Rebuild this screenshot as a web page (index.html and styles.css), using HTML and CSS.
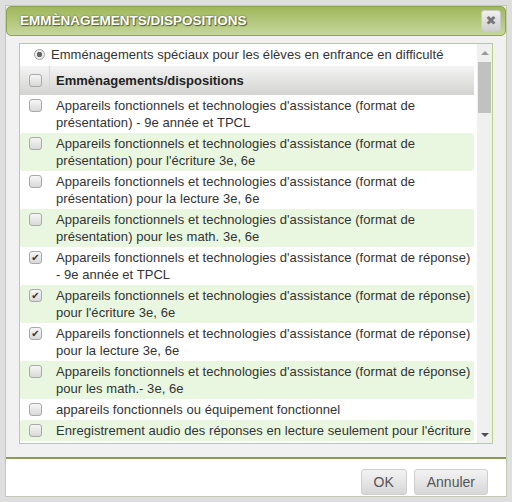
FILE: index.html
```html
<!DOCTYPE html>
<html lang="fr">
<head>
  <meta charset="UTF-8" />
  <title>Emmènagements/dispositions</title>
  <link rel="stylesheet" href="styles.css">
</head>
<body>
  <div class="dialog">
    <div class="titlebar">
      <span class="title">EMMÈNAGEMENTS/DISPOSITIONS</span>
      <button class="close-btn">✖</button>
    </div>
    <div class="content">
      <div class="listbox">
        <div class="list">
          <div class="radio-row"><span class="radio"></span>Emménagements spéciaux pour les élèves en enfrance en difficulté</div>
          <div class="head-row">
            <div class="col-check"><span class="box"></span></div>
            <div class="col-text">Emmènagements/dispositions</div>
          </div>
          <div class="row">
            <div class="col-check"><span class="box"></span></div>
            <div class="col-text">Appareils fonctionnels et technologies d'assistance (format de présentation) - 9e année et TPCL</div>
          </div>
          <div class="row alt">
            <div class="col-check"><span class="box"></span></div>
            <div class="col-text">Appareils fonctionnels et technologies d'assistance (format de présentation) pour l'écriture 3e, 6e</div>
          </div>
          <div class="row">
            <div class="col-check"><span class="box"></span></div>
            <div class="col-text">Appareils fonctionnels et technologies d'assistance (format de présentation) pour la lecture 3e, 6e</div>
          </div>
          <div class="row alt">
            <div class="col-check"><span class="box"></span></div>
            <div class="col-text">Appareils fonctionnels et technologies d'assistance (format de présentation) pour les math. 3e, 6e</div>
          </div>
          <div class="row">
            <div class="col-check"><span class="box checked">✔</span></div>
            <div class="col-text">Appareils fonctionnels et technologies d'assistance (format de réponse) - 9e année et TPCL</div>
          </div>
          <div class="row alt">
            <div class="col-check"><span class="box checked">✔</span></div>
            <div class="col-text">Appareils fonctionnels et technologies d'assistance (format de réponse) pour l'écriture 3e, 6e</div>
          </div>
          <div class="row">
            <div class="col-check"><span class="box checked">✔</span></div>
            <div class="col-text">Appareils fonctionnels et technologies d'assistance (format de réponse) pour la lecture 3e, 6e</div>
          </div>
          <div class="row alt">
            <div class="col-check"><span class="box"></span></div>
            <div class="col-text">Appareils fonctionnels et technologies d'assistance (format de réponse) pour les math.- 3e, 6e</div>
          </div>
          <div class="row">
            <div class="col-check"><span class="box"></span></div>
            <div class="col-text">appareils fonctionnels ou équipement fonctionnel</div>
          </div>
          <div class="row alt">
            <div class="col-check"><span class="box"></span></div>
            <div class="col-text">Enregistrement audio des réponses en lecture seulement pour l'écriture</div>
          </div>
        </div>
        <div class="scrollbar">
          <span class="arrow up"></span>
          <div class="track"><div class="thumb"></div></div>
          <span class="arrow down"></span>
        </div>
      </div>
    </div>
    <div class="footer">
      <button class="btn">OK</button>
      <button class="btn">Annuler</button>
    </div>
  </div>
</body>
</html>
```

FILE: styles.css
```css
/* base */
* { margin: 0; padding: 0; box-sizing: border-box; }
body { background: #dedede; font-family: "Liberation Sans", Arial, sans-serif; font-size: 13px; color: #333; }

.dialog { margin: 5px 0 0 5px; width: 502px; height: 492px; border: 1px solid #c4c9b4; background: #f1f1f1; display: flex; flex-direction: column; }

/* title bar */
.titlebar { height: 30px; border: 1px solid #8fa54f; border-radius: 5px; background: linear-gradient(#a0b75c, #c6d79b); display: flex; align-items: center; justify-content: space-between; padding: 0 4px 0 13px; }
.title { color: #fff; font-weight: bold; font-size: 13.5px; text-shadow: 0 0 2px #55602f, 1px 1px 1px #55602f; }
.close-btn { width: 20px; height: 22px; border: 1px solid #c9cbc3; border-radius: 3px; background: linear-gradient(#f0f0f0, #cfcfcf); color: #777; font-size: 13px; line-height: 20px; text-align: center; font-family: "DejaVu Sans", sans-serif; }

/* list */
.content { flex: 1; padding: 7px 13px 13px 13px; }
.listbox { height: 401px; border: 1px solid #b9cf8e; background: #fff; display: flex; }
.list { flex: 1; overflow: hidden; padding-right: 3px; letter-spacing: 0.05px; }

.radio-row { height: 22px; display: flex; align-items: center; padding-left: 14px; gap: 6px; }
.radio { width: 11px; height: 11px; border: 1px solid #a0a0a0; border-radius: 50%; background: radial-gradient(circle, #666 0 2.5px, #eee 3px); }

.head-row { height: 29px; display: flex; align-items: center; background: linear-gradient(#f4f4f4, #d3d3d1); font-weight: bold; color: #222; letter-spacing: 0; }
.head-row .col-check { border-right: 1px solid #cfdbe6; height: 100%; width: 30px; margin-right: 6px; }

.row { display: flex; align-items: flex-start; padding: 2px 0; line-height: 17px; border-radius: 3px; }
.row.alt { background: #e9f6e0; }
.col-check { width: 36px; flex: none; display: flex; align-items: center; padding-left: 9px; }
.row .col-check { height: 17px; }
.col-text { flex: 1; }

.box { width: 13px; height: 13px; border: 1px solid #a9a9a9; border-radius: 3px; background: linear-gradient(#f6f6f6, #d9d9d9); font-size: 10px; line-height: 11px; text-align: center; color: #333; font-family: "DejaVu Sans", sans-serif; letter-spacing: 0; }

/* scrollbar */
.scrollbar { width: 15px; background: #f0f0f0; display: flex; flex-direction: column; align-items: center; }
.arrow { height: 13px; display: flex; align-items: center; }
.arrow.up::before { content: ''; border: 4px solid transparent; border-bottom: 4px solid #9a9a9a; border-top: 0; }
.arrow.down::before { content: ''; border: 4px solid transparent; border-top: 4px solid #505050; border-bottom: 0; }
.track { flex: 1; width: 100%; padding-top: 2px; }
.thumb { height: 51px; background: #c1c1c1; margin: 0 1px; }
.arrow.up { margin-top: 3px; }
.arrow.down { margin-bottom: 1px; }

/* footer */
.footer { height: 40px; border-top: 2px solid #8c9c52; background: #fff; display: flex; justify-content: flex-end; align-items: flex-start; gap: 7px; padding: 10px 18px 0 0; }
.btn { height: 26px; border: 1px solid #cfcfcf; border-radius: 3px; background: linear-gradient(#f3f3f3, #d7d7d7); color: #555; font-family: "Liberation Sans", Arial, sans-serif; font-size: 14px; padding: 0 12px; }
```
